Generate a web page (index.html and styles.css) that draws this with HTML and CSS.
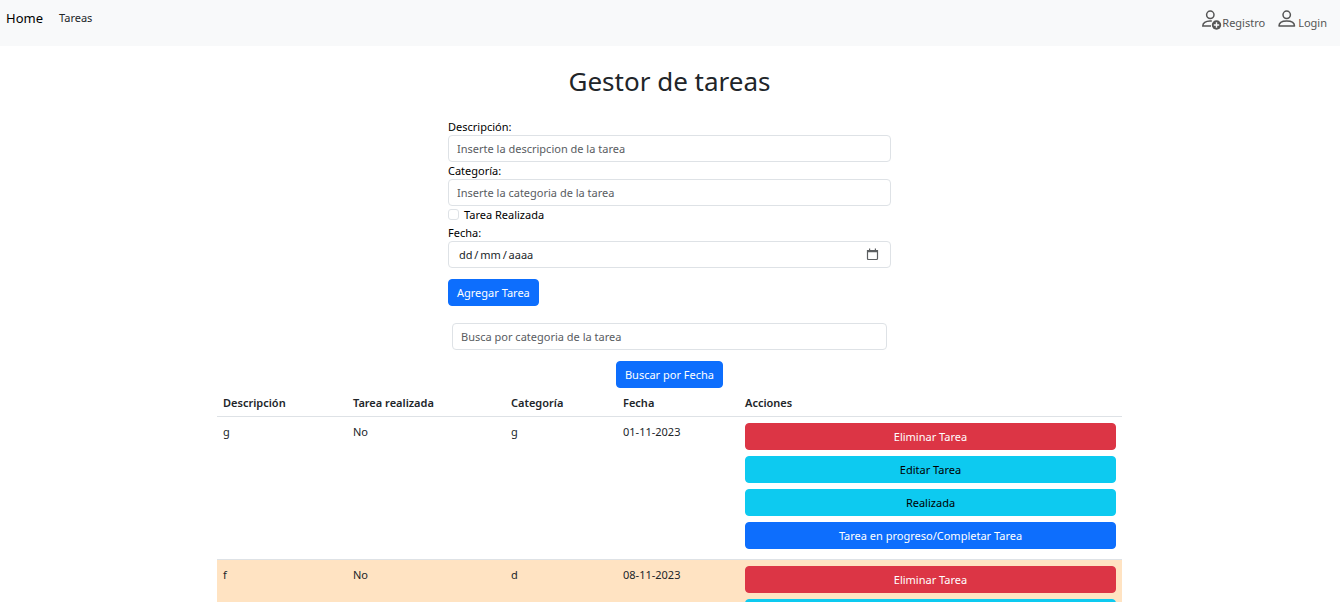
FILE: index.html
```html
<!DOCTYPE html>
<html lang="es">
<head>
<meta charset="utf-8">
<title>Gestor de tareas</title>
<link rel="stylesheet" href="styles.css">
</head>
<body>
<nav class="navbar">
  <div class="nav-group">
    <a class="brand" href="#">Home</a>
    <a class="nav-link" href="#">Tareas</a>
  </div>
  <div class="nav-group nav-user">
    <a class="user-link" href="#"><svg class="icon" viewBox="0 0 20 20" aria-hidden="true"><circle cx="8.300" cy="4.800" r="3.700" fill="none" stroke="currentColor" stroke-width="1.500"/><path d="M9.800 11H8C3.500 11 .8 13 .8 16H9" fill="none" stroke="currentColor" stroke-width="1.500"/><circle cx="14.500" cy="15" r="4.700" fill="currentColor"/><path d="M14.500 12.300v5.400M11.800 15h5.400" stroke="#f8f9fa" stroke-width="1.400"/></svg>Registro</a>
    <a class="user-link" href="#"><svg class="icon" viewBox="0 0 20 20" aria-hidden="true"><circle cx="8.700" cy="4.800" r="3.700" fill="none" stroke="currentColor" stroke-width="1.500"/><path d="M1 16C1 13 4 11 8.700 11s7.800 2 7.800 5Z" fill="none" stroke="currentColor" stroke-width="1.500" stroke-linejoin="round"/></svg>Login</a>
  </div>
</nav>
<main class="page">
  <h1 class="title">Gestor de tareas</h1>
  <form class="task-form">
    <label class="label" for="desc">Descripción:</label>
    <input class="control" id="desc" type="text" placeholder="Inserte la descripcion de la tarea">
    <label class="label" for="cat">Categoría:</label>
    <input class="control" id="cat" type="text" placeholder="Inserte la categoria de la tarea">
    <div class="check-row">
      <input class="check" id="done" type="checkbox">
      <label for="done">Tarea Realizada</label>
    </div>
    <label class="label" for="date">Fecha:</label>
    <div class="control date-control">
      <input class="date-input" id="date" type="text" placeholder="dd&#8201;/&#8201;mm&#8201;/&#8201;aaaa">
      <button class="date-button" type="button" aria-label="Abrir calendario"><svg class="calendar" viewBox="0 0 13 13" aria-hidden="true"><path d="M1.500 2.500h10v8q0 1-1 1h-8q-1 0-1-1Z" fill="none" stroke="currentColor" stroke-width="1.200"/><path d="M1 2h11v2.300H1ZM3 .5h1.200V3H3ZM8.800.5H10V3H8.800Z" fill="currentColor"/></svg></button>
    </div>
    <button class="btn btn-primary submit" type="button">Agregar Tarea</button>
  </form>
  <form class="search-form">
    <input class="control" type="text" aria-label="Buscar" placeholder="Busca por categoria de la tarea">
    <button class="btn btn-primary" type="button">Buscar por Fecha</button>
  </form>
  <table class="tasks">
    <colgroup><col class="col-desc"><col class="col-done"><col class="col-cat"><col class="col-date"><col></colgroup>
    <thead>
      <tr><th>Descripción</th><th>Tarea realizada</th><th>Categoría</th><th>Fecha</th><th>Acciones</th></tr>
    </thead>
    <tbody>
      <tr>
        <td>g</td><td>No</td><td>g</td><td>01-11-2023</td>
        <td><div class="actions">
          <button class="btn btn-danger" type="button">Eliminar Tarea</button>
          <button class="btn btn-info" type="button">Editar Tarea</button>
          <button class="btn btn-info" type="button">Realizada</button>
          <button class="btn btn-primary" type="button">Tarea en progreso/Completar Tarea</button>
        </div></td>
      </tr>
      <tr class="highlight">
        <td>f</td><td>No</td><td>d</td><td>08-11-2023</td>
        <td><div class="actions">
          <button class="btn btn-danger" type="button">Eliminar Tarea</button>
          <button class="btn btn-info" type="button">Editar Tarea</button>
          <button class="btn btn-info" type="button">Realizada</button>
          <button class="btn btn-primary" type="button">Tarea en progreso/Completar Tarea</button>
        </div></td>
      </tr>
    </tbody>
  </table>
</main>
</body>
</html>
```
FILE: styles.css
```css
* { box-sizing: border-box; }
html { scrollbar-width: none; }
body {
  margin: 0;
  background: #fff;
  color: #212529;
  font-family: "Noto Sans", "Open Sans", sans-serif;
  font-size: 11px;
  line-height: 17px;
}
input, button { font: inherit; color: inherit; }
.navbar {
  display: flex;
  justify-content: space-between;
  padding: 8px 13px 8px 6px;
  min-height: 46px;
  background: #f8f9fa;
}
.nav-group { display: flex; align-items: flex-start; gap: 16px; }
.nav-group a { text-decoration: none; }
.brand { color: #000; font-size: 13px; line-height: 20px; }
.nav-link { color: #212529; line-height: 20px; }
.nav-user { gap: 13px; padding-top: 2px; }
.user-link { display: flex; align-items: flex-end; color: #555; line-height: 16px; }
.icon { width: 20px; height: 20px; margin-bottom: 1px; }
.page { display: flex; flex-direction: column; align-items: center; padding-right: 1px; }
.title { margin: 17px 0 18px; font-size: 26px; font-weight: 400; line-height: 37px; }
.task-form, .search-form {
  display: flex;
  flex-direction: column;
  width: calc((100% - 10px) / 3);
}
.label { color: #000; }
.control {
  width: 100%;
  height: 27px;
  padding: 4px 8px;
  border: 1px solid #dee2e6;
  border-radius: 4px;
  background: #fff;
}
.control::placeholder { color: #595c5f; opacity: 1; }
.check-row { display: flex; align-items: flex-start; gap: 5px; height: 18px; color: #000; }
.check {
  appearance: none;
  width: 11px;
  height: 11px;
  margin: 3px 0 0;
  border: 1px solid #dee2e6;
  border-radius: 3px;
}
.date-control { display: flex; align-items: center; padding: 0 11px 0 10px; }
.date-input { flex: 1; min-width: 0; padding: 0; border: 0; outline: 0; }
.date-input::placeholder { color: #212529; opacity: 1; }
.date-button { display: flex; padding: 0; border: 0; background: none; color: #5c5f61; }
.calendar { width: 13px; height: 13px; }
.btn {
  height: 27px;
  padding: 4px 8px;
  border: 1px solid transparent;
  border-radius: 4px;
  cursor: pointer;
}
.btn-primary { background: #0d6efd; border-color: #0d6efd; color: #fff; }
.btn-danger { background: #dc3545; border-color: #dc3545; color: #fff; }
.btn-info { background: #0dcaf0; border-color: #0dcaf0; color: #000; }
.submit { align-self: flex-start; margin-top: 11px; }
.search-form { align-items: center; gap: 11px; margin-top: 17px; padding: 0 4px; }
.tasks {
  width: 100%;
  max-width: 905px;
  margin-top: 3px;
  border-collapse: separate;
  border-spacing: 0;
  table-layout: fixed;
}
.col-desc { width: 130px; }
.col-done { width: 158px; }
.col-cat { width: 112px; }
.col-date { width: 122px; }
.tasks th, .tasks td {
  padding: 6px;
  border-bottom: 1px solid #dee2e6;
  text-align: left;
  vertical-align: top;
}
.tasks th { padding: 3px 6px 5px; font-weight: 600; }
.tasks td { padding-bottom: 10px; }
.highlight td { background: #ffe3c2; }
.actions { display: flex; flex-direction: column; gap: 6px; }
```
